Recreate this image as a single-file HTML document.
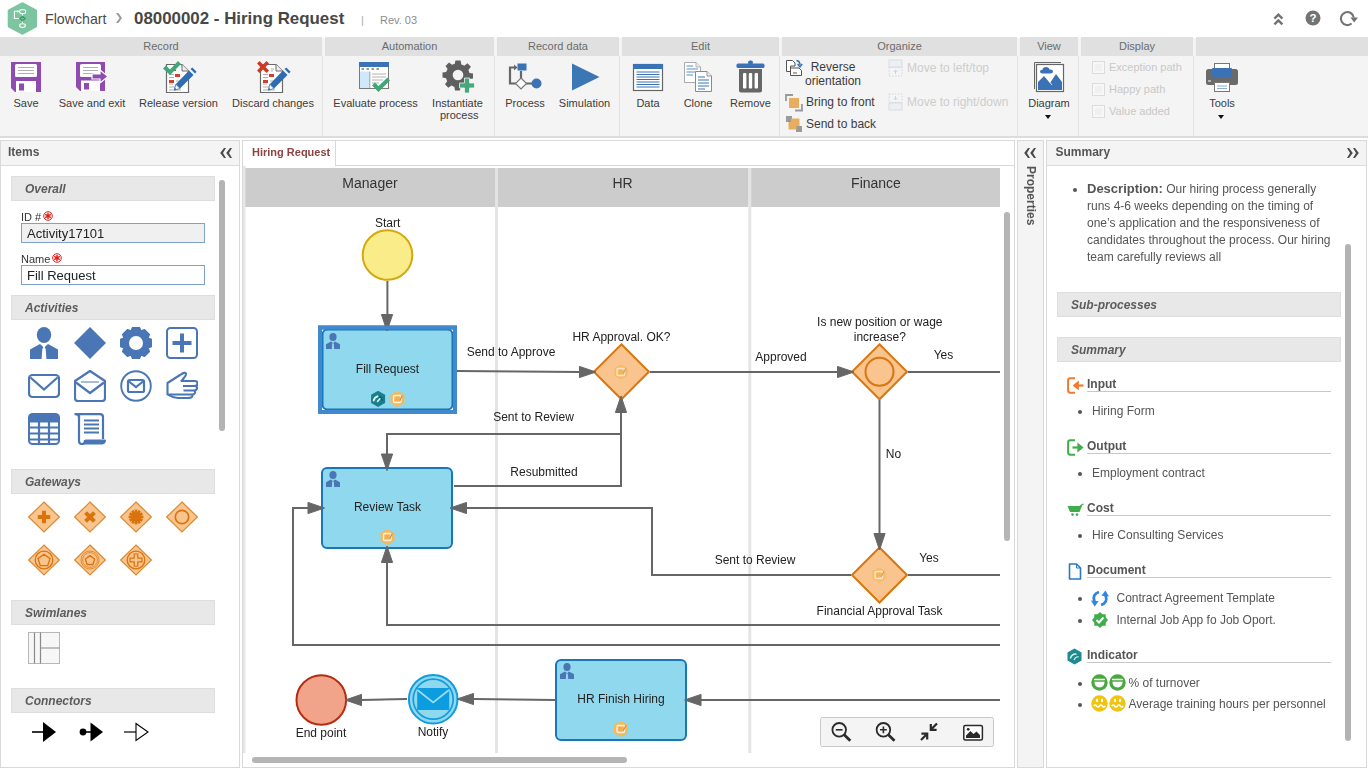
<!DOCTYPE html>
<html><head><meta charset="utf-8">
<style>
*{box-sizing:border-box;margin:0;padding:0}
html,body{width:1368px;height:768px;overflow:hidden;background:#fff;font-family:"Liberation Sans",sans-serif;color:#4a4a4a;font-size:12px}
.abs{position:absolute}
#hdr{position:absolute;left:0;top:0;width:1368px;height:38px;background:#fff}
#tb{position:absolute;left:0;top:38px;width:1368px;height:100px;background:#f4f4f4;border-bottom:2px solid #dcdcdc}
.gh{position:absolute;top:-1px;height:19px;background:#e0e0e0;color:#6b6b6b;font-size:11px;line-height:19px;text-align:center}
.gs{position:absolute;top:18px;width:1px;height:80px;background:#e2e2e2}
.btn{position:absolute;top:59px;text-align:center;font-size:11px;color:#3c3c3c;line-height:12px;white-space:nowrap}
.panel{position:absolute;border:1px solid #ddd8d8;background:#fff}
.gray{will-change:transform}
.phead{position:absolute;left:0;top:0;right:0;height:25px;background:#f4f4f4;border-bottom:1px solid #dcdcdc;font-weight:bold;color:#555;font-size:12px;line-height:23px;padding-left:7px}
.sec{position:absolute;height:25px;background:#e8e8e8;border:1px solid #dedede;font-style:italic;font-weight:bold;color:#5c5c5c;font-size:12px;line-height:24px;padding-left:13px}
.cb{width:13px;height:13px;border:1px solid #dcdcdc;background:#f0f0f0;box-shadow:inset 0 0 0 2px #f7f7f7}
.inp{width:184px;height:20px;border:1px solid #7fa2cc;font-size:13px;color:#222;line-height:19px;padding-left:5px}
</style></head><body>
<div id="hdr">
<svg class="abs" style="left:6px;top:1px" width="33" height="36" viewBox="0 0 33 36"><polygon points="16.4,2.8 29.5,9.8 29.5,25.1 16.4,32.1 3.3,25.1 3.3,9.8" fill="#7cc5a0" stroke="#7cc5a0" stroke-width="3.2" stroke-linejoin="round"/><g fill="none" stroke="#fff" stroke-width="1.1"><rect x="13.7" y="8.8" width="5.9" height="3.7" rx="1.2"/><path d="M13.7 10.3 H8.4 V17.5 H13.6"/><path d="M16.5 12.6 V15 M16.5 20.2 V22.4"/><ellipse cx="16.5" cy="24.6" rx="2.9" ry="1.9"/></g><path d="M11.4 8.9 L13 10.3 L11.4 11.7 Z" fill="#fff"/><path d="M16.6 15.3 L19.4 17.5 L16.6 19.7 L13.8 17.5 Z" fill="#6fbd95" stroke="#3d9e6c" stroke-width="1.1"/></svg>
<div class="abs" style="left:45px;top:10px;font-size:14.2px;color:#4a4a4a;line-height:18px">Flowchart</div>
<svg class="abs" style="left:115px;top:12px" width="8" height="12" viewBox="0 0 8 12"><path d="M1 1 L4.6 6 L1 11 L3.4 11 L7 6 L3.4 1 Z" fill="#9a9a9a"/></svg>
<div class="abs" style="left:134px;top:8px;font-size:16.9px;font-weight:bold;color:#474747;line-height:22px">08000002 - Hiring Request</div>
<div class="abs" style="left:361px;top:13px;font-size:11px;color:#aaa;line-height:14px">|</div>
<div class="abs" style="left:380px;top:13px;font-size:11px;color:#8c8c8c;line-height:14px">Rev. 03</div>
<svg class="abs" style="left:1270px;top:11px" width="16" height="16" viewBox="0 0 16 16"><path d="M4.4 7.6 L8.4 3.6 L12.4 7.6 M4.4 13.4 L8.4 9.4 L12.4 13.4" fill="none" stroke="#717171" stroke-width="2.3"/></svg>
<svg class="abs" style="left:1304px;top:9px" width="18" height="18" viewBox="0 0 18 18"><circle cx="9" cy="9" r="7.5" fill="#737373"/><text x="9" y="13.2" font-family="Liberation Sans" font-weight="bold" font-size="11.5" fill="#fff" text-anchor="middle">?</text></svg>
<svg class="abs" style="left:1338px;top:9px;will-change:transform" width="22" height="20" viewBox="0 0 22 20"><path d="M13.6 14.5 A6.5 6.5 0 1 1 15.8 8.6" fill="none" stroke="#737373" stroke-width="2.1"/><path d="M12.4 8.6 H20 L16.2 13.4 Z" fill="#737373"/></svg>
</div>
<div id="tb">
<div class="gh" style="left:0;width:322px">Record</div>
<div class="gh" style="left:325px;width:169px">Automation</div>
<div class="gh" style="left:497px;width:122px">Record data</div>
<div class="gh" style="left:622px;width:157px">Edit</div>
<div class="gh" style="left:782px;width:235px">Organize</div>
<div class="gh" style="left:1020px;width:58px">View</div>
<div class="gh" style="left:1081px;width:112px">Display</div>
<div class="gh" style="left:1196px;width:172px"></div>
<div class="gs" style="left:322px"></div><div class="gs" style="left:494px"></div><div class="gs" style="left:619px"></div><div class="gs" style="left:779px"></div><div class="gs" style="left:1017px"></div><div class="gs" style="left:1078px"></div><div class="gs" style="left:1193px"></div>

<!-- save -->
<svg class="abs" style="left:10px;top:23px" width="32" height="32" viewBox="0 0 32 32"><path d="M1 1 H31 V31 H5 L1 27 Z" fill="#8f4bb0"/><rect x="5" y="3" width="22" height="13" rx="1.5" fill="#fff"/><path d="M8 6.5H24M8 9.5H24M8 12.5H24" stroke="#b0b0b0" stroke-width="1"/><rect x="6" y="20" width="20" height="11" fill="#fff"/><rect x="9" y="22.5" width="5" height="7" fill="#8f4bb0"/></svg>
<!-- save exit -->
<svg class="abs" style="left:75px;top:23px" width="34" height="32" viewBox="0 0 34 32"><path d="M1 1 H30 V30 H5 L1 26 Z" fill="#8f4bb0"/><rect x="5" y="3" width="21" height="13" rx="1.5" fill="#fff"/><path d="M8 6.5H23M8 9.5H23M8 12.5H19" stroke="#b0b0b0" stroke-width="1"/><rect x="6" y="19.5" width="19" height="10.5" fill="#fff"/><rect x="9" y="22" width="5" height="6.5" fill="#8f4bb0"/><path d="M17 13 H25 V9 L33 15.5 L25 22 V18 H17 Z" fill="#8f4bb0" stroke="#fff" stroke-width="1.2"/></svg>
<!-- release -->
<svg class="abs" style="left:162px;top:22px" width="36" height="34" viewBox="0 0 36 34"><path d="M4.5 4.5 H20 L26.5 11 V32.5 H4.5 Z" fill="#fff" stroke="#6a6a6a" stroke-width="1.2"/><path d="M20 4.5 V11 H26.5" fill="#f0f0f0" stroke="#6a6a6a" stroke-width="1"/><path d="M7 14.5H12M7 17.5H12M7 24H11M7 27H19M7 30H19M14 21H19M14 24H18" stroke="#9a9a9a" stroke-width="0.8"/><rect x="13" y="14" width="5" height="3" fill="#d0402a"/><rect x="7" y="20" width="5" height="3" fill="#d0402a"/><rect x="12" y="9.5" width="2" height="1.5" fill="#d0402a"/><path d="M1 8.5 L4 5.5 L8 9.5 L16 1 L19 4 L8 15 Z" fill="#3fa878"/><path d="M27 10.5 L31.5 15 L18 28.5 L13.8 24.3 Z" fill="#2f6db3"/><path d="M13.8 24.3 L18 28.5 L12.3 30.2 Z" fill="#fff" stroke="#2f6db3" stroke-width="0.8"/><path d="M12.3 30.2 L13 27.8 L14.7 29.5 Z" fill="#2f6db3"/><path d="M28.5 9 L30.3 7.4 L34.6 11.7 L33 13.5 Z" fill="#2f6db3"/></svg>
<!-- discard -->
<svg class="abs" style="left:256px;top:22px" width="36" height="34" viewBox="0 0 36 34"><path d="M4.5 4.5 H20 L26.5 11 V32.5 H4.5 Z" fill="#fff" stroke="#6a6a6a" stroke-width="1.2"/><path d="M20 4.5 V11 H26.5" fill="#f0f0f0" stroke="#6a6a6a" stroke-width="1"/><path d="M7 14.5H12M7 17.5H12M7 24H11M7 27H19M7 30H19M14 21H19M14 24H18M15 9H18M15 11H17" stroke="#9a9a9a" stroke-width="0.8"/><rect x="13" y="14" width="5" height="3" fill="#d0402a"/><rect x="7" y="20" width="5" height="3" fill="#d0402a"/><path d="M1 3.5 L3.5 1 L7 4.5 L10.5 1 L13 3.5 L9.5 7 L13 10.5 L10.5 13 L7 9.5 L3.5 13 L1 10.5 L4.5 7 Z" fill="#cf3a24"/><path d="M27 10.5 L31.5 15 L18 28.5 L13.8 24.3 Z" fill="#2f6db3"/><path d="M13.8 24.3 L18 28.5 L12.3 30.2 Z" fill="#fff" stroke="#2f6db3" stroke-width="0.8"/><path d="M12.3 30.2 L13 27.8 L14.7 29.5 Z" fill="#2f6db3"/><path d="M28.5 9 L30.3 7.4 L34.6 11.7 L33 13.5 Z" fill="#2f6db3"/></svg>
<!-- evaluate -->
<svg class="abs" style="left:357px;top:23px" width="36" height="34" viewBox="0 0 36 34"><rect x="2.5" y="1.5" width="29" height="26" fill="#fff" stroke="#7a7a7a" stroke-width="1"/><rect x="2" y="1" width="30" height="5" fill="#3b72b5"/><path d="M4.5 8H7M9.5 8H12M14.5 8H17M19.5 8H22" stroke="#777" stroke-width="1.6"/><rect x="3" y="10.5" width="9.5" height="16.5" fill="#cfe9fb"/><path d="M12.8 10.5V27" stroke="#888" stroke-width="0.8"/><path d="M15 13H29M15 16H29M15 19H26M15 22H22" stroke="#a8a8a8" stroke-width="0.9"/><path d="M15 24.5 L18 21.5 L21.5 25 L30.5 16.5 L33 19.5 L21.5 31 Z" fill="#3fa878"/></svg>
<!-- instantiate -->
<svg class="abs" style="left:442.3px;top:21.7px" width="34" height="34" viewBox="0 0 34 34"><g transform="translate(16,15)"><path id="gear" d="M-2.6 -14.5 H2.6 L3.3 -10.6 A11 11 0 0 1 6.3 -9.3 L9.5 -11.7 L12.9 -8.2 L10.4 -5 A11 11 0 0 1 11.4 -2 L15 -1.6 V3.4 L11.2 4 A11 11 0 0 1 9.6 7 L11.7 10.3 L8.2 13.6 L5 11.3 A11 11 0 0 1 2.6 12.2 L2 15.5 H-3 L-3.6 12 A11 11 0 0 1 -6.5 10.6 L-9.7 12.7 L-13 9.2 L-10.8 6.2 A11 11 0 0 1 -11.9 3.3 L-15.5 2.6 V-2.4 L-11.8 -3 A11 11 0 0 1 -10.4 -6 L-12.5 -9 L-9 -12.4 L-6 -10.2 A11 11 0 0 1 -3.2 -11.3 Z" fill="#5f5f5f"/><circle r="5.3" fill="#f4f4f4"/></g><path d="M22.5 18 H27.5 V23 H32.5 V28 H27.5 V33 H22.5 V28 H17.5 V23 H22.5 Z" fill="#44a97c" stroke="#f4f4f4" stroke-width="0.8"/></svg>
<!-- process -->
<svg class="abs" style="left:508px;top:24px" width="36" height="30" viewBox="0 0 36 30"><path d="M14 21.5 H2 V5.5 H6.5" fill="none" stroke="#666" stroke-width="2.2"/><path d="M6 2.5 L9.5 5.5 L6 8.5 Z" fill="#666"/><path d="M13 9 V17 M18 21.5 H28" stroke="#666" stroke-width="2.2"/><rect x="9.5" y="1.5" width="9" height="7" fill="#3b72b5"/><path d="M13 16 L18.5 21.5 L13 27 L7.5 21.5 Z" fill="#fff" stroke="#777" stroke-width="1.2"/><circle cx="28.5" cy="21.5" r="5" fill="#3b72b5"/></svg>
<!-- simulation -->
<svg class="abs" style="left:571px;top:25px" width="30" height="29" viewBox="0 0 30 29"><path d="M1 0.5 L28.5 14 L1 27.5 Z" fill="#3b76b5"/></svg>
<!-- data -->
<svg class="abs" style="left:632px;top:25px" width="32" height="29" viewBox="0 0 32 29"><rect x="1.5" y="1.5" width="29" height="26" fill="#fff" stroke="#666" stroke-width="1.2"/><rect x="1" y="1" width="30" height="5" fill="#3b72b5"/><path d="M4.5 9H27.5M4.5 11.5H27.5M4.5 14H27.5M4.5 16.5H27.5M4.5 19H27.5M4.5 21.5H27.5M4.5 24H27.5" stroke="#3b72b5" stroke-width="1"/></svg>
<!-- clone -->
<svg class="abs" style="left:683px;top:23px" width="30" height="32" viewBox="0 0 30 32"><path d="M1.5 1.5 H13 L17.5 6 V21.5 H1.5 Z" fill="#fff" stroke="#aaa" stroke-width="1"/><path d="M13 1.5 V6 H17.5" fill="#eee" stroke="#aaa" stroke-width="0.9"/><path d="M3.5 5H10M3.5 8H15M3.5 11H15M3.5 14H10" stroke="#5b8cc4" stroke-width="1"/><path d="M12.5 10.5 H24 L28.5 15 V30.5 H12.5 Z" fill="#fff" stroke="#8a8a8a" stroke-width="1"/><path d="M24 10.5 V15 H28.5" fill="#eee" stroke="#8a8a8a" stroke-width="0.9"/><path d="M15 16H22M15 19H26M15 22H26M15 25H26M15 28H22" stroke="#3b72b5" stroke-width="1"/></svg>
<!-- remove -->
<svg class="abs" style="left:736px;top:22px" width="29" height="34" viewBox="0 0 29 34"><rect x="12" y="0.5" width="5" height="4" rx="2" fill="#3b72b5"/><rect x="0.5" y="3.5" width="28" height="4.5" rx="1.5" fill="#3b72b5"/><path d="M3 9 H26 V30.5 Q26 32.5 24 32.5 H5 Q3 32.5 3 30.5 Z" fill="#666"/><rect x="7" y="13" width="3.4" height="15.5" rx="1" fill="#fff"/><rect x="12.8" y="13" width="3.4" height="15.5" rx="1" fill="#fff"/><rect x="18.6" y="13" width="3.4" height="15.5" rx="1" fill="#fff"/></svg>
<!-- diagram -->
<svg class="abs" style="left:1033px;top:23px" width="32" height="32" viewBox="0 0 32 32"><path d="M1.5 28 V1.5 H28" fill="none" stroke="#666" stroke-width="1"/><rect x="3.5" y="3.5" width="27" height="27" fill="#fff" stroke="#666" stroke-width="1.2"/><path d="M5 29 V21 L11 15 L17 22 L23 13 L29 21 V29 Z" fill="#3b72b5"/><path d="M15.5 19.5 L19 24" stroke="#fff" stroke-width="0.8"/><path d="M9.5 12.5 Q7 12.5 7 10.5 Q7 8.5 9.5 8.7 Q10 6 13 6 Q16 6 16.5 8.5 Q20 8 20 10.5 Q20 12.5 17.5 12.5 Z" fill="#3b72b5"/></svg>
<!-- tools printer -->
<svg class="abs" style="left:1205px;top:24px" width="34" height="31" viewBox="0 0 34 31"><rect x="1" y="7" width="32" height="16" rx="2.5" fill="#6a6a6a"/><rect x="9.5" y="1.5" width="15" height="7" fill="#fff" stroke="#777" stroke-width="1"/><rect x="7" y="6" width="20" height="9" rx="1" fill="#3b72b5"/><rect x="9.5" y="20.5" width="15" height="9" fill="#fff" stroke="#777" stroke-width="1"/><path d="M12 24H22M12 26.5H22" stroke="#7aa3d4" stroke-width="0.9"/><rect x="3" y="18.5" width="3" height="1" fill="#fff"/></svg>
<!-- reverse orientation -->
<svg class="abs" style="left:785px;top:21px" width="18" height="18" viewBox="0 0 18 18"><path d="M1.5 1.5 H7.5 L10 4 V7 H5.5 V12.5 H1.5 Z" fill="#fff" stroke="#555" stroke-width="1"/><path d="M5.5 9 H14 L16.5 11.5 V16.5 H5.5 Z" fill="#fff" stroke="#555" stroke-width="1"/><path d="M8 14H12" stroke="#555" stroke-width="1"/><path d="M11.5 1.5 Q15 2 15 6" fill="none" stroke="#2f6db3" stroke-width="1.4"/><path d="M12.6 5 L15 8 L17.2 5" fill="none" stroke="#2f6db3" stroke-width="1.3"/></svg>
<!-- bring front -->
<svg class="abs" style="left:785px;top:56px" width="18" height="18" viewBox="0 0 18 18"><path d="M1 7 V1 H8" fill="none" stroke="#9a9a9a" stroke-width="1.8"/><path d="M17 10 V16.5 H10" fill="none" stroke="#9a9a9a" stroke-width="1.8"/><rect x="4" y="4" width="10" height="10" fill="#e9ad5e"/></svg>
<!-- send back -->
<svg class="abs" style="left:785px;top:77px" width="18" height="18" viewBox="0 0 18 18"><rect x="1" y="1" width="6" height="6" fill="#9a9a9a"/><rect x="11" y="11" width="6" height="6" fill="#9a9a9a"/><path d="M6 3.5 H14.5 V11 H11.5 V14.5 H3.5 V7 H6 Z" fill="#e9ad5e"/></svg>
<!-- move left/top -->
<svg class="abs" style="left:888px;top:21px" width="15" height="18" viewBox="0 0 15 18"><rect x="1" y="1" width="13" height="7" fill="#eaf0f5" stroke="#dcdcdc" stroke-width="1"/><rect x="1" y="8.5" width="13" height="8.5" fill="none" stroke="#d4d4d4" stroke-width="1" stroke-dasharray="1.5 1.5"/><path d="M7.5 15 V11 M5.5 13 L7.5 11 L9.5 13" fill="none" stroke="#c5d6e8" stroke-width="1"/></svg>
<svg class="abs" style="left:888px;top:55px" width="15" height="18" viewBox="0 0 15 18"><rect x="1" y="10" width="13" height="7" fill="#eaf0f5" stroke="#dcdcdc" stroke-width="1"/><rect x="1" y="1" width="13" height="8.5" fill="none" stroke="#d4d4d4" stroke-width="1" stroke-dasharray="1.5 1.5"/><path d="M7.5 3 V7 M5.5 5 L7.5 7 L9.5 5" fill="none" stroke="#c5d6e8" stroke-width="1"/></svg>

<div class="btn" style="left:26px;transform:translateX(-50%)">Save</div>
<div class="btn" style="left:92px;transform:translateX(-50%)">Save and exit</div>
<div class="btn" style="left:178.5px;transform:translateX(-50%)">Release version</div>
<div class="btn" style="left:273px;transform:translateX(-50%)">Discard changes</div>
<div class="btn" style="left:375.5px;transform:translateX(-50%)">Evaluate process</div>
<div class="btn" style="left:457.5px;transform:translateX(-50%)">Instantiate<br><span style="position:relative;left:1.7px">process</span></div>
<div class="btn" style="left:525px;transform:translateX(-50%)">Process</div>
<div class="btn" style="left:584.5px;transform:translateX(-50%)">Simulation</div>
<div class="btn" style="left:648px;transform:translateX(-50%)">Data</div>
<div class="btn" style="left:698px;transform:translateX(-50%)">Clone</div>
<div class="btn" style="left:750.5px;transform:translateX(-50%)">Remove</div>
<div class="btn" style="left:1049px;transform:translateX(-50%)">Diagram</div>
<div class="btn" style="left:1222px;transform:translateX(-50%)">Tools</div>
<div class="btn" style="left:833px;top:22px;transform:translateX(-50%);line-height:14px;font-size:12px">Reverse<br>orientation</div>
<div class="btn" style="left:806px;top:57px;line-height:14px;font-size:12px">Bring to front</div>
<div class="btn" style="left:806px;top:79px;line-height:14px;font-size:12px">Send to back</div>
<div class="btn" style="left:907px;top:23px;line-height:14px;color:#cdcdcd;font-size:12px">Move to left/top</div>
<div class="btn" style="left:907px;top:57px;line-height:14px;color:#cdcdcd;font-size:12px">Move to right/down</div>
<div class="btn" style="left:1109px;top:22px;line-height:14px;color:#c8c8c8;font-size:11px">Exception path</div>
<div class="btn" style="left:1109px;top:44px;line-height:14px;color:#c8c8c8;font-size:11px">Happy path</div>
<div class="btn" style="left:1109px;top:66px;line-height:14px;color:#c8c8c8;font-size:11px">Value added</div>
<div class="abs cb" style="left:1092px;top:23px"></div><div class="abs cb" style="left:1092px;top:45px"></div><div class="abs cb" style="left:1092px;top:67px"></div>
<div class="abs" style="left:1045px;top:77px;width:0;height:0;border-left:3.5px solid transparent;border-right:3.5px solid transparent;border-top:4px solid #111"></div>
<div class="abs" style="left:1218px;top:77px;width:0;height:0;border-left:3.5px solid transparent;border-right:3.5px solid transparent;border-top:4px solid #111"></div>
</div>
<div class="panel" id="left" style="left:0;top:140px;width:240px;height:628px"><div class="abs gray" style="left:0;top:0;right:0;bottom:0"><div class="phead" style="color:#555">Items</div>
<svg class="abs" style="left:218px;top:6px" width="14" height="12" viewBox="0 0 14 12"><path d="M5 1 L1.2 6 L5 11 L7 11 L4 6 L7 1 Z M11 1 L7.2 6 L11 11 L13 11 L10 6 L13 1 Z" fill="#4a4a4a"/></svg>
<div class="sec" style="left:10px;top:35px;width:204px">Overall</div>
<div class="abs" style="left:20px;top:70px;font-size:11px;color:#333;line-height:12px">ID #</div>
<svg class="abs rq" style="left:42px;top:70px" width="10" height="10" viewBox="0 0 10 10"><circle cx="5" cy="5" r="4.3" fill="none" stroke="#e0201a" stroke-width="1"/><path d="M5 1.8V8.2M2.2 3.4L7.8 6.6M7.8 3.4L2.2 6.6" stroke="#e0201a" stroke-width="1.4"/></svg>
<div class="abs inp" style="left:20px;top:82px;background:#f0f0f0">Activity17101</div>
<div class="abs" style="left:20px;top:112px;font-size:11px;color:#333;line-height:12px">Name</div>
<svg class="abs rq" style="left:51px;top:112px" width="10" height="10" viewBox="0 0 10 10"><circle cx="5" cy="5" r="4.3" fill="none" stroke="#e0201a" stroke-width="1"/><path d="M5 1.8V8.2M2.2 3.4L7.8 6.6M7.8 3.4L2.2 6.6" stroke="#e0201a" stroke-width="1.4"/></svg>
<div class="abs inp" style="left:20px;top:124px;background:#fff">Fill Request</div>
<div class="sec" style="left:10px;top:154px;width:204px">Activities</div>
<svg class="abs" style="left:29px;top:186px" width="32" height="32" viewBox="0 0 32 32"><ellipse cx="14" cy="8" rx="7.2" ry="8" fill="#4a76b5"/><path d="M0 32 V22.5 L10 17 L14 20.5 L18 17 L28 22.5 V32 Z" fill="#4a76b5"/><path d="M14 19.5 L12.3 22 L11.6 32 H16.4 L15.7 22 Z" fill="#fff"/><path d="M12.5 18.3 H15.5 L14.9 20.5 H13.1 Z" fill="#fff"/></svg>
<svg class="abs" style="left:73px;top:186px" width="32" height="32" viewBox="0 0 32 32"><path d="M16 0 L32 16 L16 32 L0 16 Z" fill="#4a76b5"/></svg>
<svg class="abs" style="left:119px;top:186px" width="32" height="32" viewBox="0 0 32 32"><path d="M12.6 0.6 L19.4 0.6 L20.9 4.4 L20.7 4.3 L24.5 2.7 L29.3 7.5 L27.7 11.3 L27.6 11.1 L31.4 12.6 L31.4 19.4 L27.6 20.9 L27.7 20.7 L29.3 24.5 L24.5 29.3 L20.7 27.7 L20.9 27.6 L19.4 31.4 L12.6 31.4 L11.1 27.6 L11.3 27.7 L7.5 29.3 L2.7 24.5 L4.3 20.7 L4.4 20.9 L0.6 19.4 L0.6 12.6 L4.4 11.1 L4.3 11.3 L2.7 7.5 L7.5 2.7 L11.3 4.3 L11.1 4.4 Z" fill="#4a76b5" stroke="#4a76b5" stroke-width="1.6" stroke-linejoin="round"/><circle cx="16" cy="16" r="7" fill="#fff"/></svg>
<svg class="abs" style="left:165px;top:186px" width="32" height="32" viewBox="0 0 32 32"><rect x="1" y="1" width="30" height="30" rx="3.5" fill="#fff" stroke="#4a76b5" stroke-width="2"/><path d="M16 6.5 V25.5 M6.5 16 H25.5" stroke="#4a76b5" stroke-width="4"/></svg>
<svg class="abs" style="left:27px;top:229px" width="32" height="32" viewBox="0 0 32 32"><rect x="1" y="5" width="30" height="22" rx="3.5" fill="#fff" stroke="#4a76b5" stroke-width="2.2"/><path d="M2.5 7.5 L16 19.5 L29.5 7.5" fill="none" stroke="#4a76b5" stroke-width="2.2"/></svg>
<svg class="abs" style="left:73px;top:229px" width="32" height="32" viewBox="0 0 32 32"><path d="M1 11 L16 1 L31 11 V28 Q31 31 28 31 H4 Q1 31 1 28 Z" fill="#fff" stroke="#4a76b5" stroke-width="2.2" stroke-linejoin="round"/><path d="M2 12.5 L16 23 L30 12.5" fill="none" stroke="#4a76b5" stroke-width="2.2"/><path d="M7 12 H25" stroke="#4a76b5" stroke-width="1.2" opacity="0.8"/></svg>
<svg class="abs" style="left:119px;top:229px" width="32" height="32" viewBox="0 0 32 32"><circle cx="16" cy="16" r="14.8" fill="#fff" stroke="#4a76b5" stroke-width="1.9"/><rect x="8" y="10" width="16" height="12" rx="1.5" fill="#fff" stroke="#4a76b5" stroke-width="2.2"/><path d="M9 11.5 L16 17 L23 11.5" fill="none" stroke="#4a76b5" stroke-width="2.2"/></svg>
<svg class="abs" style="left:165px;top:229px" width="32" height="32" viewBox="0 0 32 32"><path d="M1.5 24.5 V13 L14 5 Q19 1.5 20 3.5 Q20.5 5 17.5 8.5 L15.5 11 H28.5 Q31.5 11 31.5 13.5 Q31.5 16 28.5 16 H17 M28.5 16 Q31.5 16.3 31 18.5 Q30.6 20.5 28 20.5 H17.5 M28 20.5 Q29.5 21 29 23 Q28.5 24.5 26 24.5 H18 M26 24.5 Q26.8 25.5 26 26.8 Q25 28 21 28 H12 Q6 27.5 1.5 24.5 Z" fill="#fff" stroke="#4a76b5" stroke-width="2.1" stroke-linejoin="round"/></svg>
<svg class="abs" style="left:27px;top:272px" width="32" height="32" viewBox="0 0 32 32"><rect x="1" y="1" width="30" height="30" rx="3.5" fill="#fff" stroke="#4a76b5" stroke-width="2"/><path d="M1 4.5 Q1 1 4.5 1 H27.5 Q31 1 31 4.5 V8 H1 Z" fill="#4a76b5"/><path d="M1 8.5H31M1 14.5H31M1 20.5H31M1 26.5H31M11 8V31M21 8V31" stroke="#4a76b5" stroke-width="2.2"/></svg>
<svg class="abs" style="left:73px;top:272px" width="32" height="32" viewBox="0 0 32 32"><path d="M5 4 Q5 1.2 2 1.2 H26 Q29 1.2 29 4 V26" fill="#fff" stroke="#4a76b5" stroke-width="2.2"/><path d="M5 4 V28 Q5 31 8 31 Q11 31 11 27" fill="none" stroke="#4a76b5" stroke-width="2.2"/><path d="M8 31 H28.5 Q31.5 31 31.5 27 H11 Q11 31 8 31 Z" fill="#4a76b5" stroke="#4a76b5" stroke-width="1"/><path d="M0.5 1.2 H5 V5" fill="none" stroke="#4a76b5" stroke-width="2.2"/><path d="M10 7.5H25M10 11.5H25M10 15.5H25M10 19.5H25" stroke="#4a76b5" stroke-width="2.1"/></svg>
<div class="sec" style="left:10px;top:328px;width:204px">Gateways</div>
<svg class="abs" style="left:26px;top:359.25px" width="34" height="34" viewBox="0 0 34 34"><path d="M17 2 L32.4 17 L17 32 L1.6 17 Z" fill="#f9c48d" stroke="#db8a32" stroke-width="1.2"/><path d="M17 10.8 V23.2 M10.8 17 H23.2" stroke="#d9740d" stroke-width="4"/></svg>
<svg class="abs" style="left:72px;top:359.25px" width="34" height="34" viewBox="0 0 34 34"><path d="M17 2 L32.4 17 L17 32 L1.6 17 Z" fill="#f9c48d" stroke="#db8a32" stroke-width="1.2"/><path d="M12.6 12.6 L21.4 21.4 M21.4 12.6 L12.6 21.4" stroke="#d9740d" stroke-width="4"/></svg>
<svg class="abs" style="left:118px;top:359.25px" width="34" height="34" viewBox="0 0 34 34"><path d="M17 2 L32.4 17 L17 32 L1.6 17 Z" fill="#f9c48d" stroke="#db8a32" stroke-width="1.2"/><path d="M17 9.6 V24.4" stroke="#d9740d" stroke-width="2.7" transform="rotate(0 17 17)"/><path d="M17 9.6 V24.4" stroke="#d9740d" stroke-width="2.7" transform="rotate(30 17 17)"/><path d="M17 9.6 V24.4" stroke="#d9740d" stroke-width="2.7" transform="rotate(60 17 17)"/><path d="M17 9.6 V24.4" stroke="#d9740d" stroke-width="2.7" transform="rotate(90 17 17)"/><path d="M17 9.6 V24.4" stroke="#d9740d" stroke-width="2.7" transform="rotate(120 17 17)"/><path d="M17 9.6 V24.4" stroke="#d9740d" stroke-width="2.7" transform="rotate(150 17 17)"/><circle cx="17" cy="17" r="5.4" fill="#d9740d"/></svg>
<svg class="abs" style="left:164px;top:359.25px" width="34" height="34" viewBox="0 0 34 34"><path d="M17 2 L32.4 17 L17 32 L1.6 17 Z" fill="#f9c48d" stroke="#db8a32" stroke-width="1.2"/><circle cx="17" cy="17" r="6.7" fill="none" stroke="#d9740d" stroke-width="1.7"/></svg>
<svg class="abs" style="left:26px;top:402.3px" width="34" height="34" viewBox="0 0 34 34"><path d="M17 2 L32.4 17 L17 32 L1.6 17 Z" fill="#f9c48d" stroke="#db8a32" stroke-width="1.2"/><circle cx="17" cy="17" r="8.8" fill="none" stroke="#d9740d" stroke-width="1.3"/><path d="M17.0 11.2 L23.0 15.6 L20.7 22.6 L13.3 22.6 L11.0 15.6 Z" fill="none" stroke="#d9740d" stroke-width="1.4" stroke-linejoin="round"/></svg>
<svg class="abs" style="left:72px;top:402.3px" width="34" height="34" viewBox="0 0 34 34"><path d="M17 2 L32.4 17 L17 32 L1.6 17 Z" fill="#f9c48d" stroke="#db8a32" stroke-width="1.2"/><circle cx="17" cy="17" r="9" fill="none" stroke="#d9740d" stroke-width="0.7"/><circle cx="17" cy="17" r="7.4" fill="none" stroke="#d9740d" stroke-width="0.7"/><path d="M17.0 12.6 L21.7 16.0 L19.9 21.5 L14.1 21.5 L12.3 16.0 Z" fill="none" stroke="#d9740d" stroke-width="1.3" stroke-linejoin="round"/></svg>
<svg class="abs" style="left:118px;top:402.3px" width="34" height="34" viewBox="0 0 34 34"><path d="M17 2 L32.4 17 L17 32 L1.6 17 Z" fill="#f9c48d" stroke="#db8a32" stroke-width="1.2"/><circle cx="17" cy="17" r="8.8" fill="none" stroke="#d9740d" stroke-width="1.3"/><path d="M15.2 11 H18.8 V15.2 H23 V18.8 H18.8 V23 H15.2 V18.8 H11 V15.2 H15.2 Z" fill="none" stroke="#d9740d" stroke-width="1.2"/></svg>
<div class="sec" style="left:10px;top:459px;width:204px">Swimlanes</div>
<svg class="abs" style="left:27px;top:491px" width="32" height="32" viewBox="0 0 32 32"><rect x="0.5" y="0.5" width="31" height="31" fill="#f7f7f7" stroke="#b8b8b8" stroke-width="1"/><path d="M6.5 0.5V31.5M12.5 0.5V31.5M12.5 16H31.5" stroke="#8a8a8a" stroke-width="1.2"/></svg>
<div class="sec" style="left:10px;top:547px;width:204px">Connectors</div>
<svg class="abs" style="left:30px;top:579px" width="26" height="24" viewBox="0 0 26 24"><path d="M1 12 H14" stroke="#000" stroke-width="1.6"/><path d="M12 2 L25 12 L12 22 Z" fill="#000"/></svg>
<svg class="abs" style="left:77px;top:579px" width="26" height="24" viewBox="0 0 26 24"><circle cx="5" cy="12" r="3.4" fill="#000"/><path d="M5 12 H14" stroke="#000" stroke-width="1.6"/><path d="M12.5 2.5 L25 12 L12.5 21.5 Z" fill="#000"/></svg>
<svg class="abs" style="left:122px;top:579px" width="28" height="24" viewBox="0 0 28 24"><path d="M1 12 H13" stroke="#000" stroke-width="1.2"/><path d="M13 3.5 L25 12 L13 20.5 Z" fill="#fff" stroke="#000" stroke-width="1.1"/></svg>
<div class="abs" style="left:218px;top:39px;width:6px;height:251px;border-radius:3px;background:#b3b3b3"></div>
</div></div>
<div class="panel" id="center" style="left:242px;top:140px;width:773px;height:628px"><div class="abs" style="left:0;top:0;width:93px;height:25px;border-right:1px solid #e0d4d4;background:#fff;color:#8c4343;font-weight:bold;font-size:11px;line-height:22px;padding-left:9px;will-change:transform">Hiring Request</div>
<div class="abs" style="left:93px;top:24px;width:678px;height:1px;background:#e0d4d4"></div></div>
<svg class="abs" style="left:0;top:0;will-change:transform" width="1368" height="768" viewBox="0 0 1368 768" font-family="Liberation Sans, sans-serif">
<defs><clipPath id="cv"><rect x="243" y="166" width="757" height="587"/></clipPath></defs>
<rect x="245" y="168" width="250" height="39" fill="#ccc"/><rect x="498" y="168" width="250.5" height="39" fill="#ccc"/><rect x="751" y="168" width="249" height="39" fill="#ccc"/>
<rect x="243" y="166" width="2.5" height="587" fill="#e6e6e6"/><rect x="495" y="168" width="3" height="585" fill="#e4e4e4"/><rect x="748.3" y="168" width="3" height="585" fill="#e4e4e4"/>
<text x="370" y="188" text-anchor="middle" font-size="14" fill="#333">Manager</text><text x="622.5" y="188" text-anchor="middle" font-size="14" fill="#333">HR</text><text x="876" y="188" text-anchor="middle" font-size="14" fill="#333">Finance</text>
<g clip-path="url(#cv)">














<circle cx="387.5" cy="255" r="24.8" fill="#fbec8a" stroke="#d4a810" stroke-width="2"/>
<text x="387.6" y="227" text-anchor="middle" font-size="12" fill="#222">Start</text>
<rect x="318" y="325.5" width="139" height="88.5" fill="#fff"/><rect x="320" y="327.5" width="135" height="84.5" fill="none" stroke="#4189cc" stroke-width="4"/>
<rect x="322.5" y="329.5" width="130" height="80" rx="5" fill="#8fd8ee" stroke="#1877ba" stroke-width="2"/>
<g transform="translate(326 333) scale(0.5)"><ellipse cx="14" cy="8" rx="7.2" ry="8" fill="#4a76b5"/><path d="M0 32 V22.5 L10 17 L14 20.5 L18 17 L28 22.5 V32 Z" fill="#4a76b5"/><path d="M14 19.5 L12.3 22 L11.6 32 H16.4 L15.7 22 Z" fill="#8fd8ee"/></g>
<text x="387.5" y="373" text-anchor="middle" font-size="12" fill="#222">Fill Request</text>
<polygon points="378.1,390.8 385.1,394.8 385.1,402.9 378.1,407.0 371.1,402.9 371.1,394.8" fill="#17808c"/><path d="M378.9 396.3 Q381.5 397.3 382.3 400.5" fill="none" stroke="#0c5f68" stroke-width="1.6"/><path d="M373.7 400.5 Q374.3 397.3 377.5 396.3" fill="none" stroke="#e8f4f4" stroke-width="1.9" stroke-linecap="round"/><path d="M377.5 401.5 L379.9 398.7" stroke="#e8f4f4" stroke-width="1.5" stroke-linecap="round"/><g opacity="1"><polygon points="397.5,390.9 404.5,394.9 404.5,403.1 397.5,407.1 390.5,403.1 390.5,394.9" fill="#f5b95c"/><rect x="393.5" y="395.5" width="7.6" height="7" rx="1.2" fill="none" stroke="#fdf3e2" stroke-width="1.3"/><path d="M395.3 398h3.6M395.3 399.9h3.6" stroke="#e6a548" stroke-width="0.8"/><path d="M399.9 400.6 L402.3 395.6" stroke="#c98f4a" stroke-width="1.2"/></g>
<rect x="322" y="468" width="130" height="80" rx="5" fill="#8fd8ee" stroke="#1877ba" stroke-width="2"/><g transform="translate(326 471) scale(0.5)"><ellipse cx="14" cy="8" rx="7.2" ry="8" fill="#4a76b5"/><path d="M0 32 V22.5 L10 17 L14 20.5 L18 17 L28 22.5 V32 Z" fill="#4a76b5"/><path d="M14 19.5 L12.3 22 L11.6 32 H16.4 L15.7 22 Z" fill="#8fd8ee"/></g><text x="387.5" y="511" text-anchor="middle" font-size="12" fill="#222">Review Task</text><g opacity="1"><polygon points="387.5,528.9 394.5,533.0 394.5,541.0 387.5,545.1 380.5,541.0 380.5,533.0" fill="#f5b95c"/><rect x="383.5" y="533.5" width="7.6" height="7" rx="1.2" fill="none" stroke="#fdf3e2" stroke-width="1.3"/><path d="M385.3 536h3.6M385.3 537.9h3.6" stroke="#e6a548" stroke-width="0.8"/><path d="M389.9 538.6 L392.3 533.6" stroke="#c98f4a" stroke-width="1.2"/></g>
<rect x="556" y="660" width="130" height="80" rx="5" fill="#8fd8ee" stroke="#1877ba" stroke-width="2"/><g transform="translate(560 663) scale(0.5)"><ellipse cx="14" cy="8" rx="7.2" ry="8" fill="#4a76b5"/><path d="M0 32 V22.5 L10 17 L14 20.5 L18 17 L28 22.5 V32 Z" fill="#4a76b5"/><path d="M14 19.5 L12.3 22 L11.6 32 H16.4 L15.7 22 Z" fill="#8fd8ee"/></g><text x="621" y="703" text-anchor="middle" font-size="12" fill="#222">HR Finish Hiring</text><g opacity="1"><polygon points="621.0,720.9 628.0,725.0 628.0,733.0 621.0,737.1 614.0,733.0 614.0,725.0" fill="#f5b95c"/><rect x="617" y="725.5" width="7.6" height="7" rx="1.2" fill="none" stroke="#fdf3e2" stroke-width="1.3"/><path d="M618.8 728h3.6M618.8 729.9h3.6" stroke="#e6a548" stroke-width="0.8"/><path d="M623.4 730.6 L625.8 725.6" stroke="#c98f4a" stroke-width="1.2"/></g>
<path d="M621.4 344.3 L648.9 371.8 L621.4 399.3 L593.9 371.8 Z" fill="#f9c48d" stroke="#d9760f" stroke-width="2" stroke-linejoin="miter"/><g opacity="0.75"><polygon points="621.0,364.4 627.6,368.2 627.6,375.8 621.0,379.6 614.4,375.8 614.4,368.2" fill="#f5b95c"/><rect x="617" y="368.5" width="7.6" height="7" rx="1.2" fill="none" stroke="#fdf3e2" stroke-width="1.3"/><path d="M618.8 371h3.6M618.8 372.9h3.6" stroke="#e6a548" stroke-width="0.8"/><path d="M623.4 373.6 L625.8 368.6" stroke="#c98f4a" stroke-width="1.2"/></g>
<path d="M879.5 344.3 L907 371.8 L879.5 399.3 L852 371.8 Z" fill="#f9c48d" stroke="#d9760f" stroke-width="2" stroke-linejoin="miter"/><circle cx="879.5" cy="371.8" r="14" fill="none" stroke="#d9760f" stroke-width="2"/>
<path d="M879.5 547.5 L907 575 L879.5 602.5 L852 575 Z" fill="#f9c48d" stroke="#d9760f" stroke-width="2" stroke-linejoin="miter"/><g opacity="0.75"><polygon points="879.0,567.4 885.6,571.2 885.6,578.8 879.0,582.6 872.4,578.8 872.4,571.2" fill="#f5b95c"/><rect x="875" y="571.5" width="7.6" height="7" rx="1.2" fill="none" stroke="#fdf3e2" stroke-width="1.3"/><path d="M876.8 574h3.6M876.8 575.9h3.6" stroke="#e6a548" stroke-width="0.8"/><path d="M881.4 576.6 L883.8 571.6" stroke="#c98f4a" stroke-width="1.2"/></g>
<circle cx="433.2" cy="699.2" r="24.3" fill="#8fd8ee" stroke="#119de0" stroke-width="2"/><circle cx="433.2" cy="699.2" r="20" fill="#8fd8ee" stroke="#119de0" stroke-width="1.7"/><rect x="417.2" y="688" width="32" height="22" fill="#0b9de0"/><path d="M417.4 690 L433.2 702.4 L449 690" fill="none" stroke="#9edcf2" stroke-width="1.7"/><text x="433" y="736" text-anchor="middle" font-size="12" fill="#222">Notify</text>
<circle cx="321.3" cy="700" r="24.8" fill="#f2a48b" stroke="#b62c10" stroke-width="2"/>
<text x="321" y="737" text-anchor="middle" font-size="12" fill="#222">End point</text>

<path d="M387.4 281 V316" fill="none" stroke="#666" stroke-width="2" stroke-linejoin="miter"/><path d="M387 331 L381.4 314.5 L392.6 314.5 Z" fill="#666" stroke="#666" stroke-width="1" stroke-linejoin="miter"/><path d="M457 371 L580 372" fill="none" stroke="#666" stroke-width="2" stroke-linejoin="miter"/><path d="M596 372 L579.5 366.4 L579.5 377.6 Z" fill="#666" stroke="#666" stroke-width="1" stroke-linejoin="miter"/><path d="M650 372 H838" fill="none" stroke="#666" stroke-width="2" stroke-linejoin="miter"/><path d="M854 372 L837.5 366.4 L837.5 377.6 Z" fill="#666" stroke="#666" stroke-width="1" stroke-linejoin="miter"/><path d="M908 372 H1001" fill="none" stroke="#666" stroke-width="2" stroke-linejoin="miter"/><path d="M879.5 400 V533" fill="none" stroke="#666" stroke-width="2" stroke-linejoin="miter"/><path d="M879.5 550 L873.9 533.5 L885.1 533.5 Z" fill="#666" stroke="#666" stroke-width="1" stroke-linejoin="miter"/><path d="M908 575 H1001" fill="none" stroke="#666" stroke-width="2" stroke-linejoin="miter"/><path d="M851 575 H652 V508 H466" fill="none" stroke="#666" stroke-width="2" stroke-linejoin="miter"/><path d="M450 508 L466.5 502.4 L466.5 513.6 Z" fill="#666" stroke="#666" stroke-width="1" stroke-linejoin="miter"/><path d="M621 400 V434 H387 V455" fill="none" stroke="#666" stroke-width="2" stroke-linejoin="miter"/><path d="M387 470.5 L381.4 454 L392.6 454 Z" fill="#666" stroke="#666" stroke-width="1" stroke-linejoin="miter"/><path d="M454 486 H621 V412" fill="none" stroke="#666" stroke-width="2" stroke-linejoin="miter"/><path d="M621 396 L615.4 412.5 L626.6 412.5 Z" fill="#666" stroke="#666" stroke-width="1" stroke-linejoin="miter"/><path d="M1001 625 H387 V561" fill="none" stroke="#666" stroke-width="2" stroke-linejoin="miter"/><path d="M387 546 L381.4 562.5 L392.6 562.5 Z" fill="#666" stroke="#666" stroke-width="1" stroke-linejoin="miter"/><path d="M1001 645 H293 V508 H309" fill="none" stroke="#666" stroke-width="2" stroke-linejoin="miter"/><path d="M324.5 508 L308 502.4 L308 513.6 Z" fill="#666" stroke="#666" stroke-width="1" stroke-linejoin="miter"/><path d="M1001 700 H700" fill="none" stroke="#666" stroke-width="2" stroke-linejoin="miter"/><path d="M684.5 700 L701 694.4 L701 705.6 Z" fill="#666" stroke="#666" stroke-width="1" stroke-linejoin="miter"/><path d="M555 700 L473 699" fill="none" stroke="#666" stroke-width="2" stroke-linejoin="miter"/><path d="M457 699 L473.5 693.4 L473.5 704.6 Z" fill="#666" stroke="#666" stroke-width="1" stroke-linejoin="miter"/><path d="M407 699 L361 700" fill="none" stroke="#666" stroke-width="2" stroke-linejoin="miter"/><path d="M345 700 L361.5 694.4 L361.5 705.6 Z" fill="#666" stroke="#666" stroke-width="1" stroke-linejoin="miter"/>
<rect x="320" y="327.5" width="135" height="84.5" fill="none" stroke="#4189cc" stroke-width="4"/><text x="511" y="356" text-anchor="middle" font-size="12" fill="#222">Send to Approve</text><text x="533.5" y="421" text-anchor="middle" font-size="12" fill="#222">Sent to Review</text><text x="544" y="476" text-anchor="middle" font-size="12" fill="#222">Resubmitted</text><text x="621.4" y="341" text-anchor="middle" font-size="12" fill="#222">HR Approval. OK?</text><text x="781" y="361" text-anchor="middle" font-size="12" fill="#222">Approved</text><text x="879.8" y="326" text-anchor="middle" font-size="12" fill="#222">Is new position or wage</text><text x="879.8" y="341" text-anchor="middle" font-size="12" fill="#222">increase?</text><text x="943.5" y="359" text-anchor="middle" font-size="12" fill="#222">Yes</text><text x="893.5" y="458" text-anchor="middle" font-size="12" fill="#222">No</text><text x="755" y="564" text-anchor="middle" font-size="12" fill="#222">Sent to Review</text><text x="929" y="562" text-anchor="middle" font-size="12" fill="#222">Yes</text><text x="879.5" y="615" text-anchor="middle" font-size="12" fill="#222">Financial Approval Task</text>
</g>
<rect x="820.5" y="717.5" width="173" height="29" rx="2" fill="#f4f4f4" stroke="#c8c8c8"/>
<g fill="none" stroke="#2a2a2a" stroke-width="1.8"><circle cx="839.2" cy="729.8" r="6.8"/><path d="M844.2 734.8 L850.3 740.8" stroke-width="2.8"/><path d="M835.8 729.8 H842.6" stroke-width="1.6"/><circle cx="883.4" cy="729.8" r="6.8"/><path d="M888.4 734.8 L894.5 740.8" stroke-width="2.8"/><path d="M880 729.8 H886.8 M883.4 726.4 V733.2" stroke-width="1.6"/></g>
<g stroke="#2a2a2a" stroke-width="2.2" fill="none"><path d="M937 723.5 L931.5 729 M930.8 724 V729.8 H936.6"/><path d="M921 740 L926.5 734.5 M927.2 739.5 V733.7 H921.4"/></g>
<rect x="963.8" y="725.5" width="18.6" height="14.6" rx="1.5" fill="#fff" stroke="#2a2a2a" stroke-width="1.5"/><path d="M966 738 V735.5 L970.5 731 L973.5 734 L976.5 731.5 L980 735 V738 Z" fill="#2a2a2a"/><circle cx="968.2" cy="729.3" r="1.4" fill="#2a2a2a"/>
<rect x="1004" y="212" width="6" height="329" rx="3" fill="#b5b5b5"/><rect x="252" y="757" width="375" height="6" rx="3" fill="#b5b5b5"/>
</svg>
<div class="panel" id="props" style="left:1017px;top:140px;width:27px;height:628px;background:#f4f4f4"><div class="abs gray" style="left:0;top:0;right:0;bottom:0">
<svg class="abs" style="left:5px;top:6.3px" width="14" height="12" viewBox="0 0 14 12"><path d="M5 1 L1.2 6 L5 11 L7 11 L4 6 L7 1 Z M11 1 L7.2 6 L11 11 L13 11 L10 6 L13 1 Z" fill="#4a4a4a"/></svg>
<div class="abs" style="left:20px;top:25px;transform-origin:0 0;transform:rotate(90deg);font-weight:bold;font-size:12px;color:#555;white-space:nowrap;line-height:14px">Properties</div>
</div></div>
<div class="panel" id="right" style="left:1046px;top:140px;width:321px;height:628px"><div class="abs gray" style="left:0;top:0;right:0;bottom:0"><div class="phead" style="color:#555;padding-left:8.5px">Summary</div>
<svg class="abs" style="left:299px;top:6px" width="14" height="12" viewBox="0 0 14 12"><path d="M3 1 L6.8 6 L3 11 L1 11 L4 6 L1 1 Z M9 1 L12.8 6 L9 11 L7 11 L10 6 L7 1 Z" fill="#4a4a4a"/></svg>
<div class="abs" style="left:26px;top:46.5px;width:4px;height:4px;border-radius:2px;background:#555"></div>
<div class="abs" style="left:40px;top:39px;width:250px;font-size:12px;line-height:17px;color:#555"><b style="font-size:13px">Description:</b> Our hiring process generally<br>runs 4-6 weeks depending on the timing of<br>one’s application and the responsiveness of<br>candidates throughout the process. Our hiring<br>team carefully reviews all</div>
<div class="sec" style="left:10px;top:151px;width:284px">Sub-processes</div>
<div class="sec" style="left:10px;top:196px;width:284px">Summary</div>
<div class="abs" style="left:40px;top:235px;width:244px;height:16px;border-bottom:1px solid #c8c8c8;font-weight:bold;font-size:12px;color:#555;line-height:15px;padding-top:1px">Input</div><svg class="abs" style="left:20px;top:236px" width="17" height="17" viewBox="0 0 17 17"><path d="M8 1.3 H3.2 Q1.1 1.3 1.1 3.4 V13.6 Q1.1 15.7 3.2 15.7 H8" fill="none" stroke="#f07a30" stroke-width="2"/><path d="M16.5 8.5 H9" stroke="#f07a30" stroke-width="2.2"/><path d="M5.6 8.5 L11.8 3.5 V13.5 Z" fill="#f07a30"/></svg>
<div class="abs" style="left:31px;top:268.5px;width:4px;height:4px;border-radius:2px;background:#555"></div><div class="abs" style="left:45px;top:263px;font-size:12px;color:#555;line-height:14px;white-space:nowrap">Hiring Form</div>
<div class="abs" style="left:40px;top:297px;width:244px;height:16px;border-bottom:1px solid #c8c8c8;font-weight:bold;font-size:12px;color:#555;line-height:15px;padding-top:1px">Output</div><svg class="abs" style="left:20px;top:298px" width="17" height="17" viewBox="0 0 17 17"><path d="M8 1.3 H3.2 Q1.1 1.3 1.1 3.4 V13.6 Q1.1 15.7 3.2 15.7 H8" fill="none" stroke="#3fae4a" stroke-width="2"/><path d="M5.5 8.5 H12" stroke="#3fae4a" stroke-width="2.2"/><path d="M16.6 8.5 L10.4 3.5 V13.5 Z" fill="#3fae4a"/></svg>
<div class="abs" style="left:31px;top:330.5px;width:4px;height:4px;border-radius:2px;background:#555"></div><div class="abs" style="left:45px;top:325px;font-size:12px;color:#555;line-height:14px;white-space:nowrap">Employment contract</div>
<div class="abs" style="left:40px;top:359px;width:244px;height:16px;border-bottom:1px solid #c8c8c8;font-weight:bold;font-size:12px;color:#555;line-height:15px;padding-top:1px">Cost</div><svg class="abs" style="left:20px;top:362px" width="17" height="14" viewBox="0 0 17 14"><path d="M0.5 3 H12.5 L15 0.8 H17 L16.5 1.8 H15.5 L12.5 9 H3 Z" fill="#3fae4a"/><circle cx="5.5" cy="11.6" r="1.3" fill="#3fae4a"/><circle cx="10" cy="11.6" r="1.3" fill="#3fae4a"/></svg>
<div class="abs" style="left:31px;top:392.5px;width:4px;height:4px;border-radius:2px;background:#555"></div><div class="abs" style="left:45px;top:387px;font-size:12px;color:#555;line-height:14px;white-space:nowrap">Hire Consulting Services</div>
<div class="abs" style="left:40px;top:421px;width:244px;height:16px;border-bottom:1px solid #c8c8c8;font-weight:bold;font-size:12px;color:#555;line-height:15px;padding-top:1px">Document</div><svg class="abs" style="left:21px;top:422px" width="14" height="17" viewBox="0 0 14 17"><path d="M1.5 1 H8.5 L12.5 5 V16 H1.5 Z" fill="#fff" stroke="#2a78c0" stroke-width="1.6" stroke-linejoin="round"/><path d="M8.5 1 V5 H12.5" fill="none" stroke="#2a78c0" stroke-width="1"/></svg>
<div class="abs" style="left:31px;top:456px;width:4px;height:4px;border-radius:2px;background:#555"></div><div class="abs" style="left:69.5px;top:449.5px;font-size:12px;color:#555;line-height:14px;white-space:nowrap">Contract Agreement Template</div>
<svg class="abs" style="left:44px;top:448.5px" width="18" height="17" viewBox="0 0 18 17"><path d="M8 2 Q0.8 4.5 3.4 11.5" fill="none" stroke="#2e86de" stroke-width="2.8"/><path d="M0 10.5 L7.6 11.2 L3.6 16.6 Z" fill="#2e86de"/><path d="M10 15 Q17.2 12.5 14.6 5.5" fill="none" stroke="#2e86de" stroke-width="2.8"/><path d="M18 6.5 L10.4 5.8 L14.4 0.4 Z" fill="#2e86de"/></svg>
<div class="abs" style="left:31px;top:477.5px;width:4px;height:4px;border-radius:2px;background:#555"></div><div class="abs" style="left:69.5px;top:472px;font-size:12px;color:#555;line-height:14px;white-space:nowrap">Internal Job App fo Job Oport.</div>
<svg class="abs" style="left:45px;top:471px" width="16" height="16" viewBox="0 0 16 16"><polygon points="8.0,0.0 10.4,2.2 13.7,2.3 13.8,5.6 16.0,8.0 13.8,10.4 13.7,13.7 10.4,13.8 8.0,16.0 5.6,13.8 2.3,13.7 2.2,10.4 0.0,8.0 2.2,5.6 2.3,2.3 5.6,2.2" fill="#3fae4a"/><path d="M4.5 8 L7 10.5 L11.5 5.5" fill="none" stroke="#fff" stroke-width="2"/></svg>
<div class="abs" style="left:40px;top:506px;width:244px;height:16px;border-bottom:1px solid #c8c8c8;font-weight:bold;font-size:12px;color:#555;line-height:15px;padding-top:1px">Indicator</div><svg class="abs" style="left:20px;top:506.5px" width="15" height="17" viewBox="0 0 15 17"><polygon points="7.5,0.5 14.5,4.5 14.5,12.5 7.5,16.5 0.5,12.5 0.5,4.5" fill="#1e8a8f"/><path d="M3.3 10.5 Q5 5.5 9.5 6.2" fill="none" stroke="#d8f0f0" stroke-width="1.5"/><path d="M7 12 Q8.5 8.3 11.7 8.8" fill="none" stroke="#d8f0f0" stroke-width="1.2"/></svg>
<div class="abs" style="left:31px;top:540.5px;width:4px;height:4px;border-radius:2px;background:#555"></div><div class="abs" style="left:81.5px;top:535px;font-size:12px;color:#555;line-height:14px;white-space:nowrap">% of turnover</div><svg class="abs" style="left:44px;top:533px" width="17" height="17" viewBox="0 0 17 17"><circle cx="8.5" cy="8.5" r="8.2" fill="#4aa83f"/><path d="M3.6 5.4 H13.4" stroke="#fff" stroke-width="1.5" stroke-linecap="round"/><path d="M3.4 7.7 H13.6 Q13.4 13.4 8.5 13.4 Q3.6 13.4 3.4 7.7 Z" fill="#fff"/></svg><svg class="abs" style="left:62px;top:533px" width="17" height="17" viewBox="0 0 17 17"><circle cx="8.5" cy="8.5" r="8.2" fill="#4aa83f"/><path d="M3.6 5.4 H13.4" stroke="#fff" stroke-width="1.5" stroke-linecap="round"/><path d="M3.4 7.7 H13.6 Q13.4 13.4 8.5 13.4 Q3.6 13.4 3.4 7.7 Z" fill="#fff"/></svg>
<div class="abs" style="left:31px;top:562px;width:4px;height:4px;border-radius:2px;background:#555"></div><div class="abs" style="left:81.5px;top:555.5px;font-size:12px;color:#555;line-height:14px;white-space:nowrap">Average training hours per personnel</div><svg class="abs" style="left:44px;top:554px" width="17" height="17" viewBox="0 0 17 17"><circle cx="8.5" cy="8.5" r="8.2" fill="#f0c40f"/><ellipse cx="6" cy="5.4" rx="1.1" ry="1.8" fill="#fff"/><ellipse cx="11" cy="5.4" rx="1.1" ry="1.8" fill="#fff"/><path d="M2.8 11 Q4.2 9 5.6 11 Q7 13 8.5 11 Q10 9 11.4 11 Q12.8 13 14.2 11" fill="none" stroke="#fff" stroke-width="1.6"/></svg><svg class="abs" style="left:62px;top:554px" width="17" height="17" viewBox="0 0 17 17"><circle cx="8.5" cy="8.5" r="8.2" fill="#f0c40f"/><ellipse cx="6" cy="5.4" rx="1.1" ry="1.8" fill="#fff"/><ellipse cx="11" cy="5.4" rx="1.1" ry="1.8" fill="#fff"/><path d="M2.8 11 Q4.2 9 5.6 11 Q7 13 8.5 11 Q10 9 11.4 11 Q12.8 13 14.2 11" fill="none" stroke="#fff" stroke-width="1.6"/></svg>
<div class="abs" style="left:298px;top:103px;width:6px;height:497px;border-radius:3px;background:#b3b3b3"></div></div></div>
</body></html>
